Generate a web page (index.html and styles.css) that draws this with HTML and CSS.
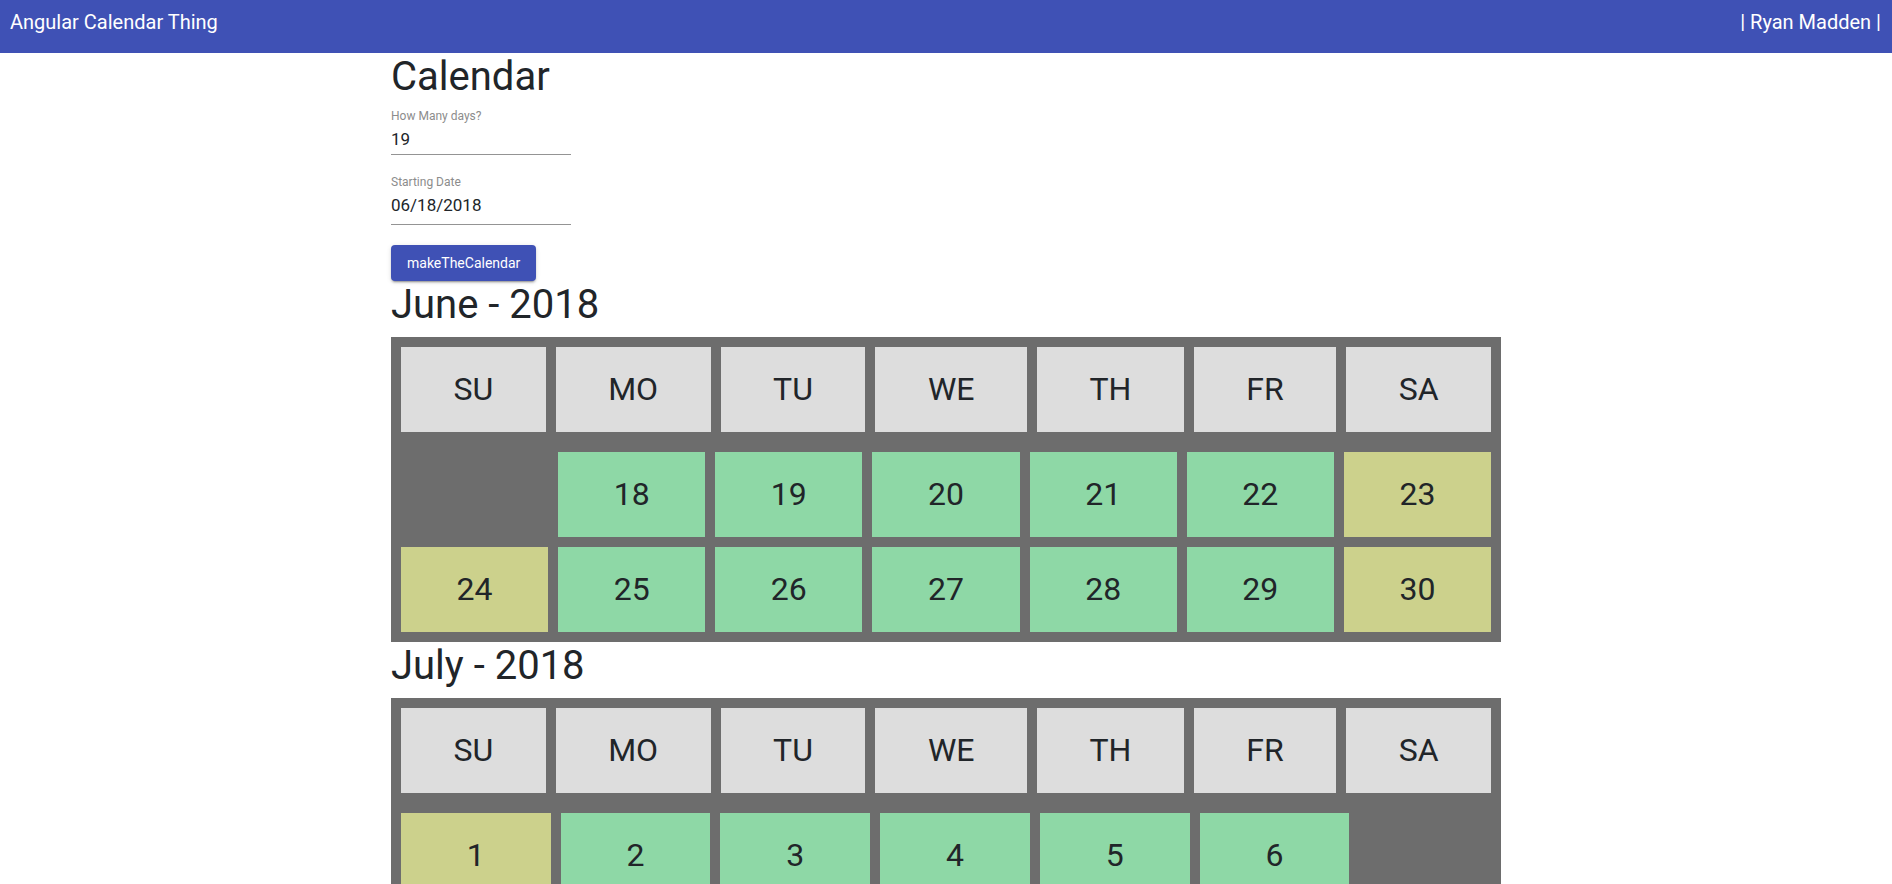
FILE: index.html
```html
<!DOCTYPE html>
<html lang="en">
<head>
<meta charset="utf-8">
<title>Angular Calendar Thing</title>
<link rel="stylesheet" href="styles.css">
</head>
<body>
<header class="topbar">
  <span class="brand">Angular Calendar Thing</span>
  <span class="user">| Ryan Madden |</span>
</header>
<main class="container">
  <h1 class="title">Calendar</h1>
  <form class="form">
    <label class="field">
      <span class="field-label">How Many days?</span>
      <input class="field-input" type="text" value="19">
    </label>
    <label class="field field-date">
      <span class="field-label">Starting Date</span>
      <input class="field-input" type="text" value="06/18/2018">
    </label>
    <button type="button" class="btn">makeTheCalendar</button>
  </form>

  <section class="month">
    <h1 class="title">June - 2018</h1>
    <div class="week-head">
      <div class="wh-cell">SU</div><div class="wh-cell">MO</div><div class="wh-cell">TU</div><div class="wh-cell">WE</div><div class="wh-cell">TH</div><div class="wh-cell">FR</div><div class="wh-cell">SA</div>
    </div>
    <div class="days">
      <div class="day blank"></div>
      <div class="day weekday">18</div>
      <div class="day weekday">19</div>
      <div class="day weekday">20</div>
      <div class="day weekday">21</div>
      <div class="day weekday">22</div>
      <div class="day weekend">23</div>
      <div class="day weekend">24</div>
      <div class="day weekday">25</div>
      <div class="day weekday">26</div>
      <div class="day weekday">27</div>
      <div class="day weekday">28</div>
      <div class="day weekday">29</div>
      <div class="day weekend">30</div>
    </div>
  </section>

  <section class="month">
    <h1 class="title">July - 2018</h1>
    <div class="week-head">
      <div class="wh-cell">SU</div><div class="wh-cell">MO</div><div class="wh-cell">TU</div><div class="wh-cell">WE</div><div class="wh-cell">TH</div><div class="wh-cell">FR</div><div class="wh-cell">SA</div>
    </div>
    <div class="days">
      <div class="day weekend">1</div>
      <div class="day weekday">2</div>
      <div class="day weekday">3</div>
      <div class="day weekday">4</div>
      <div class="day weekday">5</div>
      <div class="day weekday">6</div>
      <div class="day blank"></div>
    </div>
  </section>
</main>
</body>
</html>
```

FILE: styles.css
```css
html, body {
  margin: 0;
  padding: 0;
  background: #ffffff;
}

body {
  font-family: Roboto, "Noto Sans", "Liberation Sans", sans-serif;
  color: #212529;
}

.topbar {
  height: 53px;
  box-sizing: border-box;
  background: #3f51b5;
  color: #ffffff;
  display: flex;
  justify-content: space-between;
  align-items: flex-start;
  padding: 6.5px 11px 0 10px;
  font-size: 20px;
  line-height: 30px;
}

.container {
  max-width: 1110px;
  margin: 0 auto;
}

.title {
  margin: 0 0 8px;
  font-size: 40px;
  line-height: 48px;
  font-weight: 400;
}

.form {
  margin: 0;
}

.field {
  display: block;
  width: 180px;
  padding-bottom: 20px;
}

.field-label {
  display: block;
  font-size: 12px;
  line-height: 14px;
  color: #8c8c8c;
}

.field-input {
  display: block;
  width: 180px;
  box-sizing: content-box;
  height: 18px;
  margin: 7px 0 0;
  padding: 0 0 6px;
  border: 0;
  border-bottom: 1px solid #949494;
  border-radius: 0;
  background: transparent;
  outline: none;
  font-family: Roboto, "Noto Sans", sans-serif;
  font-size: 17px;
  line-height: 18px;
  color: #212529;
}

.field-date .field-input {
  padding-bottom: 10px;
}

.btn {
  display: block;
  height: 36px;
  margin: 0;
  padding: 0 16px;
  border: 0;
  border-radius: 4px;
  background: #3f51b5;
  color: #ffffff;
  font-family: Roboto, "Noto Sans", sans-serif;
  font-size: 14px;
  font-weight: 400;
  line-height: 36px;
  box-shadow: 0 3px 1px -2px rgba(0, 0, 0, 0.2), 0 2px 2px 0 rgba(0, 0, 0, 0.14), 0 1px 5px 0 rgba(0, 0, 0, 0.12);
  cursor: pointer;
}

.week-head,
.days {
  display: grid;
  grid-template-columns: repeat(7, auto);
  gap: 10px;
  padding: 10px;
  background: #6d6d6d;
}

.wh-cell,
.day {
  height: 85px;
  font-size: 32px;
  line-height: 85px;
  text-align: center;
  color: #212529;
}

.wh-cell {
  background: #dddddd;
}

.day.weekday {
  background: #8ed8a6;
}

.day.weekend {
  background: #ccd18c;
}
```
